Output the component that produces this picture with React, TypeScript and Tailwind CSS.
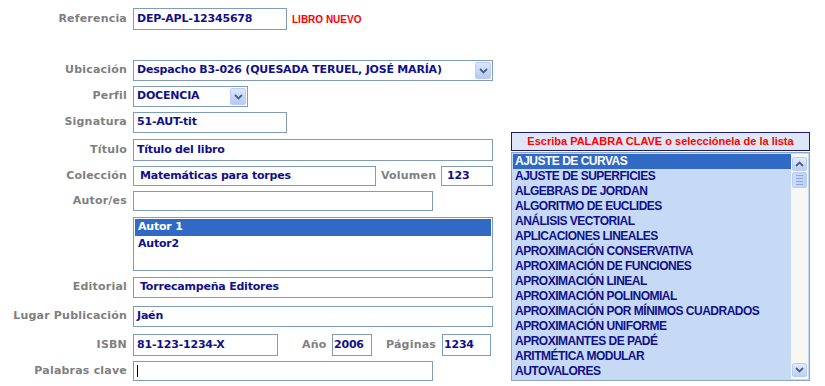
import React from 'react';

const LABEL = "font-['DejaVu_Sans',sans-serif] font-bold text-[11px] tracking-[0.2px] text-[#7f7f7f]";
const VALUE = "font-['DejaVu_Sans',sans-serif] font-bold text-[11px] tracking-[-0.2px] text-[#10108a]";
const BOX = 'border border-[#7f9db9] bg-white flex items-center overflow-hidden whitespace-nowrap';

const keywords = [
  'AJUSTE DE CURVAS',
  'AJUSTE DE SUPERFICIES',
  'ALGEBRAS DE JORDAN',
  'ALGORITMO DE EUCLIDES',
  'ANÁLISIS VECTORIAL',
  'APLICACIONES LINEALES',
  'APROXIMACIÓN CONSERVATIVA',
  'APROXIMACIÓN DE FUNCIONES',
  'APROXIMACIÓN LINEAL',
  'APROXIMACIÓN POLINOMIAL',
  'APROXIMACIÓN POR MÍNIMOS CUADRADOS',
  'APROXIMACIÓN UNIFORME',
  'APROXIMANTES DE PADÉ',
  'ARITMÉTICA MODULAR',
  'AUTOVALORES',
];

function Chevron({ up = false }: { up?: boolean }) {
  return (
    <svg width="9" height="6" viewBox="0 0 9 6">
      <path
        d={up ? 'M1 5 L4.5 1.5 L8 5' : 'M1 1 L4.5 4.5 L8 1'}
        fill="none"
        stroke="#4d6185"
        strokeWidth="1.8"
      />
    </svg>
  );
}

function ArrowButton() {
  return (
    <div className="w-[16px] h-[17px] mr-[1px] rounded-[2px] border border-[#b9cdf6] bg-gradient-to-b from-[#dce7fd] to-[#b4c9f4] flex items-center justify-center">
      <Chevron />
    </div>
  );
}

function Row({ label, mt, children }: { label: string; mt: string; children: React.ReactNode }) {
  return (
    <div className={`flex items-center ${mt}`}>
      <div className={`w-[127px] text-right whitespace-nowrap ${LABEL}`}>{label}</div>
      <div className="ml-[6px] flex items-center">{children}</div>
    </div>
  );
}

export default function App() {
  return (
    <div className="w-[825px] h-[386px] bg-white flex overflow-hidden">
      {/* Form */}
      <div className="w-[511px] flex flex-col">
        <div className="flex items-center mt-[8px]">
          <div className={`w-[127px] text-right ${LABEL}`}>Referencia</div>
          <div className={`ml-[6px] w-[154px] h-[22px] pl-[3px] ${BOX} ${VALUE}`}>DEP-APL-12345678</div>
          <span className="ml-[5px] font-['Liberation_Sans',sans-serif] font-bold text-[10px] text-[#ff0000]">
            LIBRO NUEVO
          </span>
        </div>

        <Row label="Ubicación" mt="mt-[30px]">
          <div className={`w-[360px] h-[21px] justify-between pl-[3px] ${BOX} ${VALUE}`}>
            <span>Despacho B3-026 (QUESADA TERUEL, JOSÉ MARÍA)</span>
            <ArrowButton />
          </div>
        </Row>

        <Row label="Perfil" mt="mt-[5px]">
          <div className={`w-[115px] h-[21px] justify-between pl-[3px] ${BOX} ${VALUE}`}>
            <span>DOCENCIA</span>
            <ArrowButton />
          </div>
        </Row>

        <Row label="Signatura" mt="mt-[5px]">
          <div className={`w-[154px] h-[21px] pl-[3px] ${BOX} ${VALUE}`}>51-AUT-tit</div>
        </Row>

        <Row label="Título" mt="mt-[6px]">
          <div className={`w-[360px] h-[22px] pl-[3px] ${BOX} ${VALUE}`}>Título del libro</div>
        </Row>

        <Row label="Colección" mt="mt-[5px]">
          <div className={`w-[243px] h-[20px] pl-[6px] ${BOX} ${VALUE}`}>Matemáticas para torpes</div>
          <span className={`ml-[5px] w-[60px] ${LABEL}`}>Volumen</span>
          <div className={`w-[52px] h-[20px] pl-[5px] ${BOX} ${VALUE}`}>123</div>
        </Row>

        <Row label="Autor/es" mt="mt-[5px]">
          <div className={`w-[300px] h-[20px] ${BOX}`} />
        </Row>

        <div className="flex mt-[6px]">
          <div className="w-[127px]" />
          <div className="ml-[6px] w-[360px] h-[54px] border border-[#7f9db9] bg-white p-[1px]">
            <div className={`h-[17px] pl-[3px] bg-[#316ac5] text-white flex items-center ${VALUE} !text-white`}>
              Autor 1
            </div>
            <div className={`h-[17px] pl-[3px] flex items-center ${VALUE}`}>Autor2</div>
          </div>
        </div>

        <Row label="Editorial" mt="mt-[6px]">
          <div className={`w-[360px] h-[21px] pl-[6px] ${BOX} ${VALUE}`}>Torrecampeña Editores</div>
        </Row>

        <Row label="Lugar Publicación" mt="mt-[8px]">
          <div className={`w-[360px] h-[21px] pl-[3px] ${BOX} ${VALUE}`}>Jaén</div>
        </Row>

        <Row label="ISBN" mt="mt-[7px]">
          <div className={`w-[145px] h-[22px] pl-[3px] ${BOX} ${VALUE}`}>81-123-1234-X</div>
          <span className={`ml-[24px] w-[30px] ${LABEL}`}>Año</span>
          <div className={`w-[40px] h-[22px] pl-[1px] ${BOX} ${VALUE}`}>2006</div>
          <span className={`ml-[14px] w-[56px] ${LABEL}`}>Páginas</span>
          <div className={`w-[49px] h-[22px] pl-[1px] ${BOX} ${VALUE}`}>1234</div>
        </Row>

        <Row label="Palabras clave" mt="mt-[5px]">
          <div className={`w-[300px] h-[20px] pl-[3px] ${BOX}`}>
            <div className="w-[1px] h-[12px] bg-black" />
          </div>
        </Row>
      </div>

      {/* Keyword picker */}
      <div className="w-[299px] pt-[132px] flex flex-col">
        <div className="h-[19px] border border-[#1a1a7a] bg-[#dfe7f6] flex items-center justify-center font-['Liberation_Sans',sans-serif] font-bold text-[11px] text-[#ff0000] whitespace-nowrap">
          Escriba PALABRA CLAVE o selecciónela de la lista
        </div>
        <div className="mt-[1px] h-[229px] border border-[#8ea4c4] bg-[#c6d9f5] p-[1px] flex">
          <div className="flex-1 flex flex-col">
            {keywords.map((k, i) => (
              <div
                key={k}
                className={`h-[15px] pl-[2px] leading-[15px] whitespace-nowrap font-['Liberation_Sans',sans-serif] font-bold text-[12px] tracking-[-0.5px] ${
                  i === 0 ? 'bg-[#316ac5] text-white' : 'text-[#10108a]'
                }`}
              >
                {k}
              </div>
            ))}
          </div>
          <div className="w-[17px] bg-[#f7f7f4] flex flex-col items-center pt-[3px] pb-[2px]">
            <div className="w-[15px] h-[14px] rounded-[2px] border border-[#b9cdf6] bg-gradient-to-b from-[#e1eafd] to-[#bcd0f7] flex items-center justify-center">
              <Chevron up />
            </div>
            <div className="mt-[1px] w-[15px] h-[16px] rounded-[2px] border border-[#b9cdf6] bg-gradient-to-r from-[#cddcfb] to-[#bcd0f7] flex flex-col items-center justify-center gap-[2px]">
              <div className="w-[7px] h-[1px] bg-[#8ea8dc]" />
              <div className="w-[7px] h-[1px] bg-[#8ea8dc]" />
              <div className="w-[7px] h-[1px] bg-[#8ea8dc]" />
              <div className="w-[7px] h-[1px] bg-[#8ea8dc]" />
            </div>
            <div className="flex-1" />
            <div className="w-[15px] h-[14px] rounded-[2px] border border-[#b9cdf6] bg-gradient-to-b from-[#e1eafd] to-[#bcd0f7] flex items-center justify-center">
              <Chevron />
            </div>
          </div>
        </div>
      </div>
    </div>
  );
}
